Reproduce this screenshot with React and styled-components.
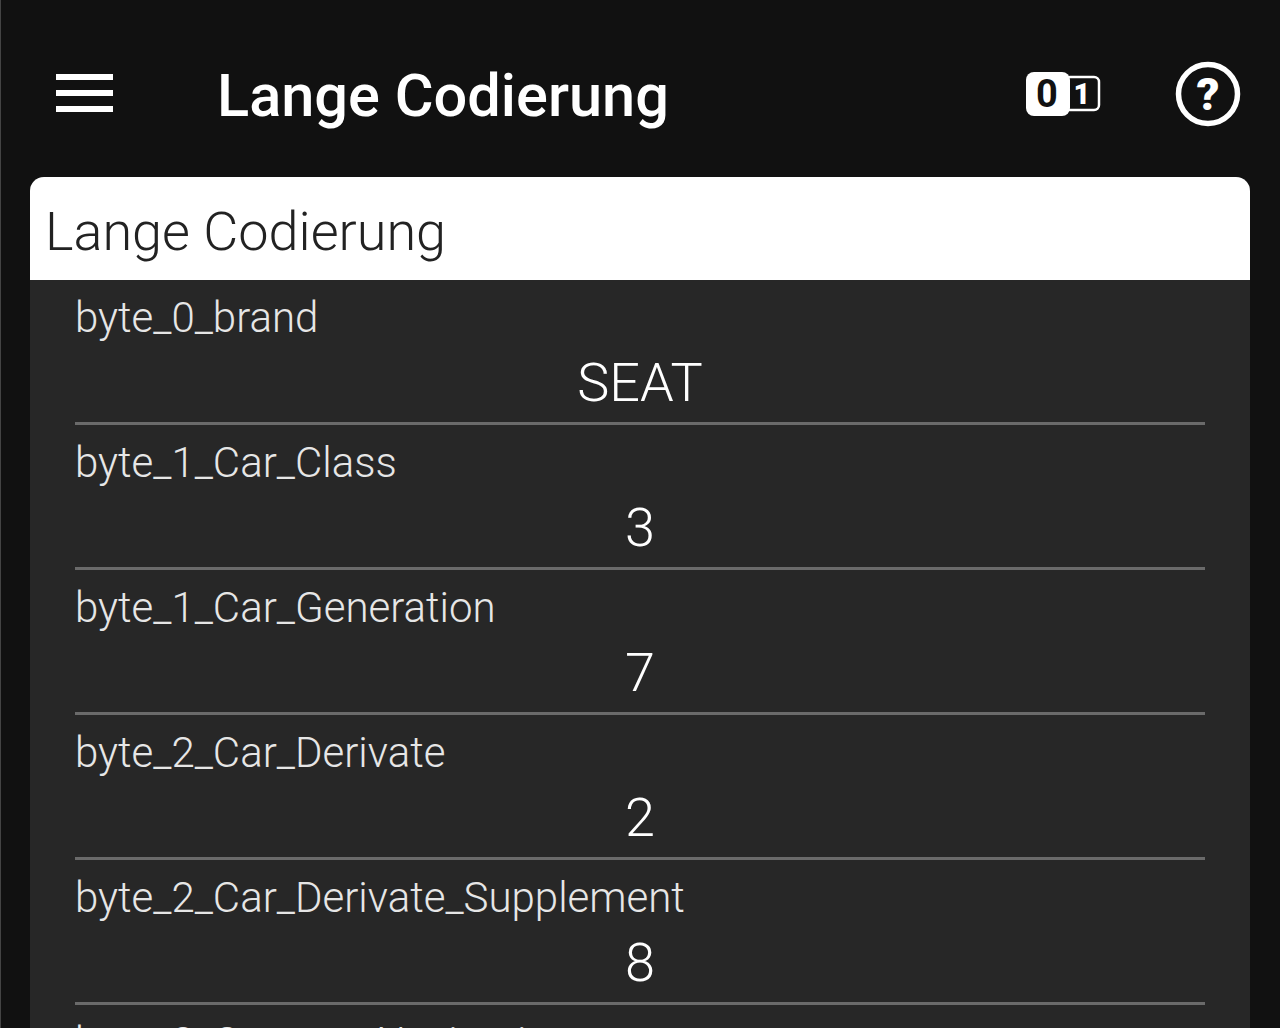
import styled, { createGlobalStyle } from 'styled-components';

const GlobalStyle = createGlobalStyle`
    html, body {
        margin: 0;
        padding: 0;
        background: #111111;
        overflow: hidden;
    }
    #root {
        height: 1028px;
    }
`
const Page = styled.div`
    width: 1280px;
    height: 1028px;
    overflow: hidden;
    background: #111111;
    border-left: 1px solid #444444;
    box-sizing: border-box;
    font-family: Roboto, "Liberation Sans", sans-serif;
`
const Toolbar = styled.div`
    height: 177px;
    box-sizing: border-box;
    padding: 11px 39px 0 55px;
    display: flex;
    align-items: center;
`
const MenuButton = styled.svg`
    width: 58px;
    height: 40px;
    margin-right: 103px;
`
const Title = styled.div`
    flex: 1;
    color: #ffffff;
    font-size: 59.5px;
    font-weight: 500;
    padding-top: 3px;
`
const BitIcon = styled.svg`
    width: 76px;
    height: 46px;
    margin-right: 74px;
`
const HelpIcon = styled.svg`
    width: 66px;
    height: 66px;
`
const Card = styled.div`
    margin: 0 30px 0 29px;
    background: linear-gradient(#242424 20px, #272727 20px);
    border-radius: 14px 14px 0 0;
    overflow: hidden;
`
const CardHeader = styled.div`
    height: 103px;
    box-sizing: border-box;
    background: #ffffff;
    padding: 5px 15px 0;
    display: flex;
    align-items: center;
    color: #222222;
    font-size: 54px;
    font-weight: 300;
`
const CardBody = styled.div`
    padding: 0 45px;
`
const Row = styled.div`
    height: 145px;
    box-sizing: border-box;
    border-bottom: 3px solid #6a6a6a;
    display: flex;
    flex-direction: column;
`
const Label = styled.div`
    color: #e6e6e6;
    font-size: 42px;
    font-weight: 300;
    line-height: 50px;
    margin-top: 13px;
`
const Value = styled.div`
    color: #ffffff;
    font-size: 54px;
    font-weight: 300;
    line-height: 66px;
    text-align: center;
    margin-top: 7px;
`

const rows = [
    ['byte_0_brand', 'SEAT'],
    ['byte_1_Car_Class', '3'],
    ['byte_1_Car_Generation', '7'],
    ['byte_2_Car_Derivate', '2'],
    ['byte_2_Car_Derivate_Supplement', '8'],
    ['byte_3_Country_Navigation', ''],
]

function App() {
    return (
        <>
            <GlobalStyle />
            <Page>
                <Toolbar>
                    <MenuButton viewBox="0 0 58 40">
                        <rect x="0" y="0" width="57" height="6" fill="#fff" />
                        <rect x="0" y="16" width="57" height="6" fill="#fff" />
                        <rect x="0" y="32" width="57" height="6" fill="#fff" />
                    </MenuButton>
                    <Title>Lange Codierung</Title>
                    <BitIcon viewBox="0 0 76 46">
                        <rect x="40" y="6" width="34" height="33" rx="5" fill="none" stroke="#fff" strokeWidth="2.5" />
                        <rect x="1" y="1" width="44" height="44" rx="8" fill="#fff" />
                        <text x="22" y="36" textAnchor="middle" fontFamily="Roboto" fontWeight="700" fontSize="38" fill="#111">0</text>
                        <text x="57" y="33" textAnchor="middle" fontFamily="Roboto" fontWeight="900" fontSize="29" fill="#fff">1</text>
                    </BitIcon>
                    <HelpIcon viewBox="0 0 66 66">
                        <circle cx="33" cy="33" r="29.5" fill="none" stroke="#fff" strokeWidth="5.5" />
                        <text x="33" y="49" textAnchor="middle" fontFamily="Roboto" fontWeight="900" fontSize="45" fill="#fff">?</text>
                    </HelpIcon>
                </Toolbar>
                <Card>
                    <CardHeader>Lange Codierung</CardHeader>
                    <CardBody>
                        {rows.map(([name, value]) => (
                            <Row key={name}>
                                <Label>{name}</Label>
                                <Value>{value}</Value>
                            </Row>
                        ))}
                    </CardBody>
                </Card>
            </Page>
        </>
    );
}

export default App;
